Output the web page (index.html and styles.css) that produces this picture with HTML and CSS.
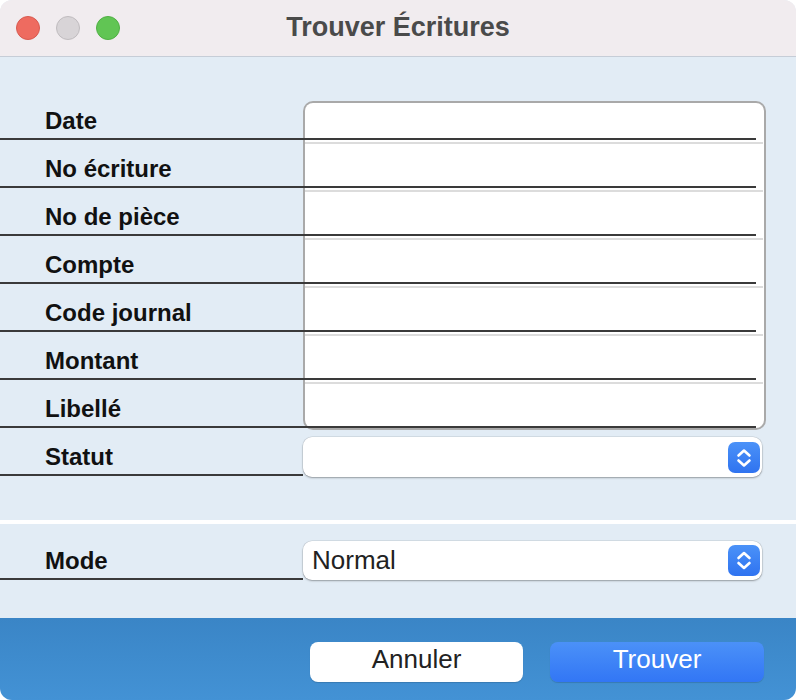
FILE: index.html
```html
<!DOCTYPE html>
<html lang="fr">
<head>
    <meta charset="UTF-8">
    <meta name="viewport" content="width=device-width, initial-scale=1.0">
    <title>Trouver Écritures</title>
    <link rel="stylesheet" href="styles.css">
</head>
<body>
    <div class="window">
        <header class="titlebar">
            <div class="lights">
                <span class="light red"></span>
                <span class="light gray"></span>
                <span class="light green"></span>
            </div>
            <h1 class="title">Trouver Écritures</h1>
        </header>

        <main class="content">
            <div class="fields">
                <div class="row">
                    <span class="label">Date</span>
                    <div class="entry first"><div class="input"></div></div>
                </div>
                <div class="row">
                    <span class="label">No écriture</span>
                    <div class="entry"><div class="input"></div></div>
                </div>
                <div class="row">
                    <span class="label">No de pièce</span>
                    <div class="entry"><div class="input"></div></div>
                </div>
                <div class="row">
                    <span class="label">Compte</span>
                    <div class="entry"><div class="input"></div></div>
                </div>
                <div class="row">
                    <span class="label">Code journal</span>
                    <div class="entry"><div class="input"></div></div>
                </div>
                <div class="row">
                    <span class="label">Montant</span>
                    <div class="entry"><div class="input"></div></div>
                </div>
                <div class="row">
                    <span class="label">Libellé</span>
                    <div class="entry last"><div class="input"></div></div>
                </div>
                <div class="row">
                    <span class="label">Statut</span>
                    <div class="popup">
                        <span class="popup-value"></span>
                        <span class="stepper">
                            <svg width="32" height="31" viewBox="0 0 32 31">
                                <polyline points="10.5,13.5 16,8.5 21.5,13.5" />
                                <polyline points="10.5,18.5 16,23.5 21.5,18.5" />
                            </svg>
                        </span>
                    </div>
                </div>
            </div>

            <div class="divider"></div>

            <div class="fields">
                <div class="row mode">
                    <span class="label">Mode</span>
                    <div class="popup">
                        <span class="popup-value">Normal</span>
                        <span class="stepper">
                            <svg width="32" height="31" viewBox="0 0 32 31">
                                <polyline points="10.5,13 16,8 21.5,13" />
                                <polyline points="10.5,18 16,23 21.5,18" />
                            </svg>
                        </span>
                    </div>
                </div>
            </div>
        </main>

        <footer class="actions">
            <button class="btn">Annuler</button>
            <button class="btn primary">Trouver</button>
        </footer>
    </div>
</body>
</html>
```

FILE: styles.css
```css
body {
    margin: 0;
    background-color: #ffffff;
    font-family: "Liberation Sans", Arial, sans-serif;
}
.window {
    width: 796px;
    height: 700px;
    display: flex;
    flex-direction: column;
    background-color: #e2ecf5;
    border-radius: 12px;
    overflow: hidden;
}

/* barre de titre */
.titlebar {
    height: 56px;
    flex-shrink: 0;
    display: grid;
    grid-template-columns: 1fr auto 1fr;
    align-items: center;
    background-color: #f1ecef;
    border-bottom: 1px solid #c6cdd7;
}
.lights {
    display: flex;
    gap: 16px;
    padding-left: 16px;
}
.light {
    width: 22px;
    height: 22px;
    border-radius: 50%;
    border: 1px solid transparent;
}
.light.red {
    background-color: #ee6b60;
    border-color: #d85a50;
}
.light.gray {
    background-color: #d8d4d7;
    border-color: #c0bcbf;
}
.light.green {
    background-color: #61c554;
    border-color: #50b044;
}
.title {
    margin: 0;
    padding-bottom: 1px;
    font-size: 27px;
    font-weight: bold;
    color: #4a4a4a;
}

/* formulaire */
.content {
    flex: 1;
    padding-top: 35px;
}
.fields {
    display: flex;
    flex-direction: column;
}
.row {
    display: flex;
    height: 48px;
}
.label {
    width: 303px;
    flex-shrink: 0;
    box-sizing: border-box;
    display: flex;
    align-items: flex-end;
    padding: 0 0 4px 45px;
    border-bottom: 2px solid #3a3a3a;
    font-size: 24px;
    line-height: 26px;
    font-weight: bold;
    color: #111111;
}
.entry {
    width: 463px;
    box-sizing: border-box;
    display: flex;
    flex-direction: column;
    background-color: #ffffff;
    border-left: 2px solid #a9a9a9;
    border-right: 2px solid #a9a9a9;
}
.entry::before {
    content: "";
    height: 2px;
    margin: 2px 1px 0 0;
    background-color: #dcdcdc;
}
.entry .input {
    flex: 1;
    margin-left: -2px;
    margin-right: 8px;
    border-bottom: 2px solid #3a3a3a;
}
.entry.first {
    margin-top: 9px;
    border-top: 2px solid #a9a9a9;
    border-radius: 10px 10px 0 0;
}
.entry.first::before {
    display: none;
}
.entry.last {
    margin-bottom: -2px;
    border-bottom: 2px solid #a9a9a9;
    border-radius: 0 0 10px 10px;
}

/* menus déroulants */
.popup {
    width: 459px;
    height: 40px;
    margin-top: 9px;
    box-sizing: border-box;
    display: flex;
    align-items: center;
    justify-content: space-between;
    padding: 0 2px 0 9px;
    background-color: #ffffff;
    border-radius: 9px;
    box-shadow: 0 0 0 0.5px rgba(0, 0, 0, 0.12), 0 1px 2px rgba(0, 0, 0, 0.3);
}
.popup-value {
    font-size: 26px;
    color: #222222;
}
.stepper {
    width: 32px;
    height: 31px;
    border-radius: 7px;
    background: linear-gradient(#4b92f8, #2f73f0);
}
.stepper svg {
    display: block;
}
.stepper polyline {
    fill: none;
    stroke: #ffffff;
    stroke-width: 2.6;
    stroke-linecap: round;
    stroke-linejoin: round;
}
.divider {
    height: 4px;
    margin-top: 44px;
    background-color: #ffffff;
}
.row.mode {
    margin-top: 8px;
}
.row.mode .popup {
    height: 39px;
}

/* boutons */
.actions {
    height: 82px;
    flex-shrink: 0;
    box-sizing: border-box;
    display: flex;
    justify-content: flex-end;
    gap: 27px;
    padding: 24px 32px 0 0;
    background: linear-gradient(#3a85c6, #4392d5);
}
.btn {
    width: 213px;
    height: 40px;
    padding: 0 0 5px;
    border: none;
    border-radius: 8px;
    background-color: #ffffff;
    color: #222222;
    font-family: "Liberation Sans", Arial, sans-serif;
    font-size: 26px;
    cursor: pointer;
    box-shadow: 0 1px 1px rgba(0, 0, 0, 0.15);
}
.btn.primary {
    width: 214px;
    background: linear-gradient(#4b91f8, #3276f5);
    color: #ffffff;
}
```
